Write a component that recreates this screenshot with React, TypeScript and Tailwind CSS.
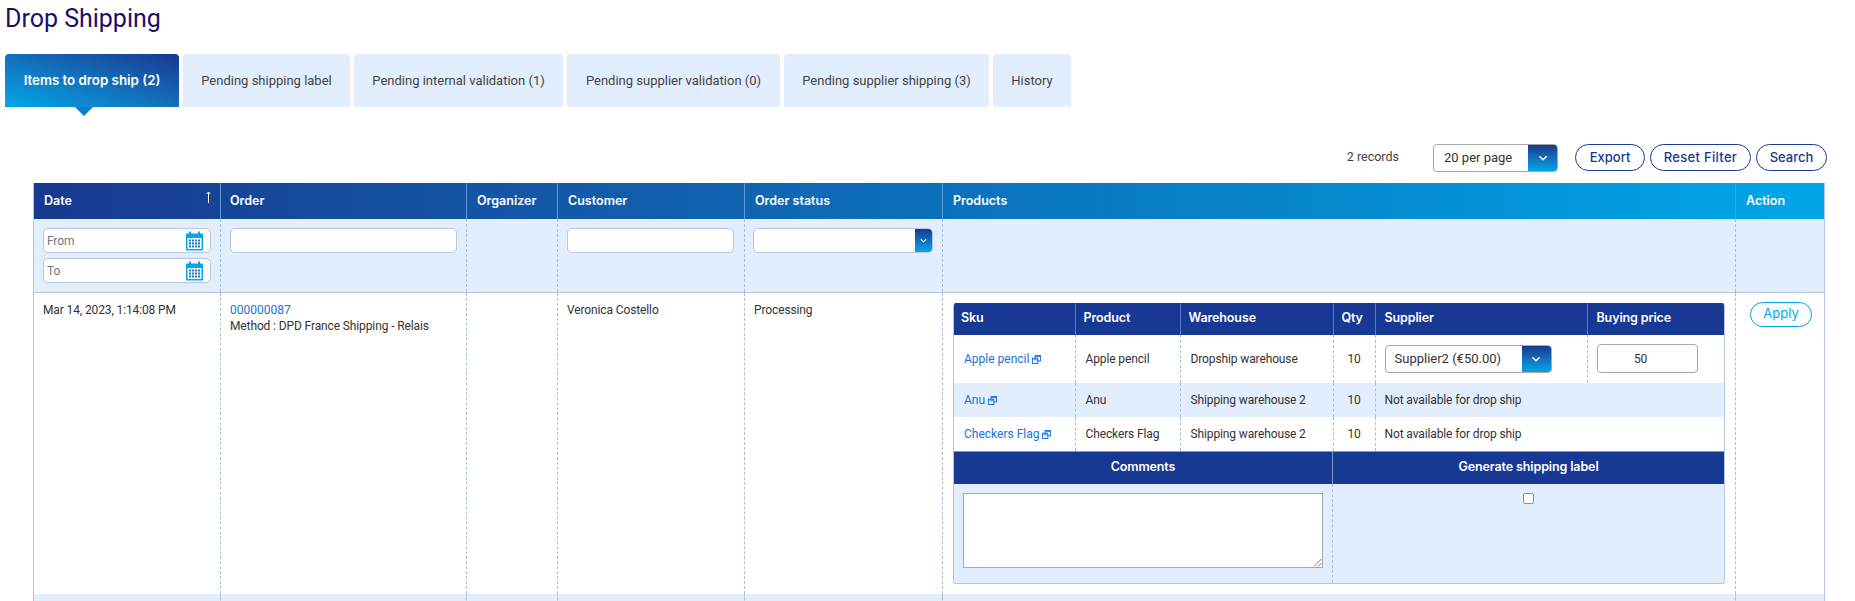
import React from 'react';

const BODY = "font-['Roboto',sans-serif]";
const HEAD = "font-['Inter',sans-serif]";

const tabs = [
  { label: 'Items to drop ship (2)', width: 'w-[174px]', active: true },
  { label: 'Pending shipping label', width: 'w-[167px]' },
  { label: 'Pending internal validation (1)', width: 'w-[209px]' },
  { label: 'Pending supplier validation (0)', width: 'w-[213px]' },
  { label: 'Pending supplier shipping (3)', width: 'w-[205px]' },
  { label: 'History', width: 'w-[78px]' },
];

const skuRows = [
  { sku: 'Apple pencil', warehouse: 'Dropship warehouse', height: 'h-[48px]', bg: 'bg-white' },
  { sku: 'Anu', warehouse: 'Shipping warehouse 2', height: 'h-[34px]', bg: 'bg-[#e2eefd]' },
  { sku: 'Checkers Flag', warehouse: 'Shipping warehouse 2', height: 'h-[34px]', bg: 'bg-white' },
];

const CalendarIcon = () => (
  <svg width="17" height="20" viewBox="0 0 17 20" className="shrink-0">
    <rect x="0" y="2.5" width="17" height="17" rx="1" fill="#00a7e8" />
    <rect x="1.5" y="7" width="14" height="11" fill="#fff" />
    <rect x="3" y="0.5" width="2" height="4" fill="#00a7e8" />
    <rect x="12" y="0.5" width="2" height="4" fill="#00a7e8" />
    {[3, 6, 9, 12].map((x) =>
      [8.5, 11.5, 14.5].map((y) => <rect key={`${x}-${y}`} x={x} y={y} width="2" height="2" fill="#0b7cc6" />)
    )}
  </svg>
);

const LinkIcon = () => (
  <svg width="9" height="9" viewBox="0 0 10 10" fill="none" stroke="#1a73e8" strokeWidth="1.1" className="ml-[3px] inline-block align-[-1px]">
    <rect x="3.5" y="0.5" width="6" height="6" />
    <path d="M3.5 1.5h6" />
    <rect x="0.5" y="3.5" width="6" height="6" fill="#fff" fillOpacity="0.6" />
    <path d="M0.5 4.5h6" />
  </svg>
);

const SortArrow = () => (
  <svg width="5" height="12" viewBox="0 0 5 12" fill="none" stroke="#fff" className="absolute right-[9px] top-[8px]">
    <path d="M2.5 1v11" />
    <path d="M.5 3 2.5 1 4.5 3" />
  </svg>
);

const Chevron = ({ size = 10 }: { size?: number }) => (
  <svg width={size} height={size} viewBox="0 0 10 10" fill="none" stroke="#fff" strokeWidth="1.2">
    <path d="M2 3.5 5 6.5 8 3.5" />
  </svg>
);

const OutlineButton = ({ label, width }: { label: string; width: string }) => (
  <button className={`${width} h-[27px] rounded-full border border-[#17398f] bg-white ${HEAD} text-[13px] font-medium text-[#17398f]`}>
    {label}
  </button>
);

const DateInput = ({ placeholder }: { placeholder: string }) => (
  <div className="flex h-[25px] w-[168px] items-center justify-between rounded-[5px] border border-[#b3c7e2] bg-white pl-[3px] pr-[7px]">
    <span className="text-[12px] text-[#757575]">{placeholder}</span>
    <CalendarIcon />
  </div>
);

const ProductsTable = () => (
  <div className="w-[772px] overflow-hidden rounded-[3px] border border-t-0 border-[#b3c7e2] bg-[#e2eefd]">
    <table className="w-full table-fixed border-collapse">
      <colgroup>
        <col className="w-[121px]" />
        <col className="w-[105px]" />
        <col className="w-[153px]" />
        <col className="w-[42px]" />
        <col className="w-[212px]" />
        <col />
      </colgroup>
      <thead>
        <tr className={`h-[32px] bg-[#173893] text-left ${HEAD} text-[12.5px] font-semibold text-white`}>
          <th className="pl-[7px] font-semibold">Sku</th>
          <th className="border-l border-[#5c7ab8] pl-2 font-semibold">Product</th>
          <th className="border-l border-[#5c7ab8] pl-2 font-semibold">Warehouse</th>
          <th className="border-l border-[#5c7ab8] pl-2 font-semibold">Qty</th>
          <th className="border-l border-[#5c7ab8] pl-[9px] font-semibold">Supplier</th>
          <th className="border-l border-[#5c7ab8] pl-[9px] font-semibold">Buying price</th>
        </tr>
      </thead>
      <tbody className="text-[12px] tracking-[-0.12px] text-[#333]">
        {skuRows.map((row, i) => (
          <tr key={row.sku} className={`${row.height} ${row.bg}`}>
            <td className="pl-2.5 tracking-normal text-[#1a73d4]">
              {row.sku}
              <LinkIcon />
            </td>
            <td className="border-l border-dashed border-[#a9bedb] pl-2.5">{row.sku}</td>
            <td className="border-l border-dashed border-[#a9bedb] pl-2.5">{row.warehouse}</td>
            <td className="border-l border-dashed border-[#a9bedb] text-center">10</td>
            {i === 0 ? (
              <>
                <td className="border-l border-dashed border-[#a9bedb] pl-[9px]">
                  <div className="flex h-[28px] w-[167px] items-center overflow-hidden rounded-[4px] border border-[#a8a8a8] bg-white">
                    <span className="flex-1 pl-[9px] text-[13px] tracking-normal">Supplier2 (€50.00)</span>
                    <span className="flex h-full w-[29px] items-center justify-center bg-gradient-to-b from-[#17398f] to-[#00a7e8]">
                      <Chevron size={12} />
                    </span>
                  </div>
                </td>
                <td className="border-l border-dashed border-[#a9bedb] pl-[9px]">
                  <div className="flex h-[29px] w-[101px] items-center justify-center rounded-[4px] border border-[#a8a8a8] bg-white pr-[13px] text-[12px]">
                    50
                  </div>
                </td>
              </>
            ) : (
              <td colSpan={2} className="border-l border-dashed border-[#a9bedb] pl-[9px]">
                Not available for drop ship
              </td>
            )}
          </tr>
        ))}
      </tbody>
    </table>
    <div className="grid grid-cols-[378px_1fr]">
      <div className={`flex h-[33px] items-center justify-center border-t border-[#7f97c6] bg-[#173893] ${HEAD} text-[12.5px] font-semibold text-white`}>
        Comments
      </div>
      <div className={`flex h-[33px] items-center justify-center border-l border-t border-[#7f97c6] bg-[#173893] ${HEAD} text-[12.5px] font-semibold text-white`}>
        Generate shipping label
      </div>
      <div className="h-[99px] pl-[9px] pt-[9px]">
        <div className="relative h-[75px] w-[360px] border border-[#a8a8a8] bg-white">
          <svg width="9" height="9" viewBox="0 0 9 9" stroke="#555" strokeWidth="0.8" className="absolute bottom-0 right-0">
            <path d="M1 8.5 8.5 1M5 8.5 8.5 5" />
          </svg>
        </div>
      </div>
      <div className="flex h-[99px] justify-center border-l border-dashed border-[#a9bedb] pt-[9px]">
        <span className="h-[11px] w-[11px] rounded-[2px] border border-[#8f8f8f] bg-white" />
      </div>
    </div>
  </div>
);

export default function App() {
  return (
    <div className={`h-[601px] overflow-hidden bg-white ${BODY}`}>
      <h1 className="pl-[5px] pt-[4px] text-[25px] leading-[30px] text-[#1a0f6e]">Drop Shipping</h1>

      <div className="mt-[20px] flex gap-[4px] pl-[5px]">
        {tabs.map((tab) =>
          tab.active ? (
            <div key={tab.label} className={`relative flex h-[53px] ${tab.width} items-center justify-center rounded-t-[4px] bg-gradient-to-tr from-[#00a7e8] to-[#17398f] ${HEAD} text-[13.3px] font-semibold text-white`}>
              {tab.label}
              <span className="absolute left-[70px] top-full h-0 w-0 border-x-[9px] border-t-[9px] border-x-transparent border-t-[#0a80c8]" />
            </div>
          ) : (
            <div key={tab.label} className={`flex h-[53px] ${tab.width} items-center justify-center rounded-t-[4px] bg-[#e2eefd] text-[13px] text-[#444]`}>
              {tab.label}
            </div>
          )
        )}
      </div>

      <div className="mt-[36px] flex h-[29px] items-center justify-end pr-[28px]">
        <span className="mr-[34px] text-[12.5px] text-[#444]">2 records</span>
        <div className="mr-[17px] flex h-[28px] w-[125px] items-center overflow-hidden rounded-[4px] border border-[#a8a8a8]">
          <span className="flex-1 pl-[10px] text-[13px] text-[#333]">20 per page</span>
          <span className="flex h-full w-[29px] items-center justify-center bg-gradient-to-b from-[#17398f] to-[#00a7e8]">
            <Chevron size={12} />
          </span>
        </div>
        <div className="flex gap-[5px]">
          <OutlineButton label="Export" width="w-[70px]" />
          <OutlineButton label="Reset Filter" width="w-[101px] tracking-[0.3px]" />
          <OutlineButton label="Search" width="w-[71px]" />
        </div>
      </div>

      <div className="mt-[11px] pl-[33px] pr-[30px]">
        <table className="w-full table-fixed border-collapse border-x border-[#b3c7e2] text-[12px] tracking-[-0.12px] text-[#333]">
          <colgroup>
            <col className="w-[187px]" />
            <col className="w-[246px]" />
            <col className="w-[91px]" />
            <col className="w-[187px]" />
            <col className="w-[198px]" />
            <col className="w-[793px]" />
            <col />
          </colgroup>
          <thead>
            <tr className={`h-[36px] bg-gradient-to-r from-[#17398f] via-[#0b70bb] to-[#00a7e8] text-left ${HEAD} text-[12.5px] tracking-normal text-white`}>
              <th className="relative pl-[10px] font-semibold">
                Date
                <SortArrow />
              </th>
              <th className="border-l border-[#5f9bd3] pl-[9px] font-semibold">Order</th>
              {['Organizer', 'Customer', 'Order status', 'Products', 'Action'].map((h) => (
                <th key={h} className="border-l border-[#5f9bd3] pl-[10px] font-semibold">{h}</th>
              ))}
            </tr>
            <tr className="h-[73px] border-b border-[#b3c7e2] bg-[#e2eefd] align-top font-normal">
              <td className="pl-[9px] pt-[9px]">
                <div className="flex flex-col gap-[5px]">
                  <DateInput placeholder="From" />
                  <DateInput placeholder="To" />
                </div>
              </td>
              <td className="border-l border-dashed border-[#a9bedb] pl-[9px] pt-[9px]">
                <div className="h-[25px] w-[227px] rounded-[5px] border border-[#b3c7e2] bg-white" />
              </td>
              <td className="border-l border-dashed border-[#a9bedb]" />
              <td className="border-l border-dashed border-[#a9bedb] pl-[9px] pt-[9px]">
                <div className="h-[25px] w-[167px] rounded-[5px] border border-[#b3c7e2] bg-white" />
              </td>
              <td className="border-l border-dashed border-[#a9bedb] pl-[8px] pt-[9px]">
                <div className="flex h-[25px] w-[180px] justify-end overflow-hidden rounded-[5px] border border-[#b3c7e2] bg-white">
                  <span className="flex h-full w-[17px] items-center justify-center bg-gradient-to-b from-[#17398f] to-[#00a7e8]">
                    <Chevron size={9} />
                  </span>
                </div>
              </td>
              <td className="border-l border-dashed border-[#a9bedb]" />
              <td className="border-l border-dashed border-[#a9bedb]" />
            </tr>
          </thead>
          <tbody>
            <tr className="h-[302px] align-top">
              <td className="pl-[9px] pt-[9px] leading-[16px]">Mar 14, 2023, 1:14:08 PM</td>
              <td className="border-l border-dashed border-[#a9bedb] pl-[9px] pt-[9px] leading-[16px]">
                <div className="tracking-normal text-[#1a73d4]">000000087</div>
                <div>Method : DPD France Shipping - Relais</div>
              </td>
              <td className="border-l border-dashed border-[#a9bedb]" />
              <td className="border-l border-dashed border-[#a9bedb] pl-[9px] pt-[9px] leading-[16px]">Veronica Costello</td>
              <td className="border-l border-dashed border-[#a9bedb] pl-[9px] pt-[9px] leading-[16px]">Processing</td>
              <td className="border-l border-dashed border-[#a9bedb] pl-[10px] pt-[10px]">
                <ProductsTable />
              </td>
              <td className="border-l border-dashed border-[#a9bedb] pl-[14px] pt-[9px]">
                <button className={`h-[25px] w-[62px] rounded-full border border-[#00a7e8] bg-white ${HEAD} text-[13px] tracking-normal text-[#00a7e8]`}>
                  Apply
                </button>
              </td>
            </tr>
            <tr className="h-[10px] bg-[#e2eefd]">
              <td />
              <td className="border-l border-dashed border-[#a9bedb]" />
              <td className="border-l border-dashed border-[#a9bedb]" />
              <td className="border-l border-dashed border-[#a9bedb]" />
              <td className="border-l border-dashed border-[#a9bedb]" />
              <td className="border-l border-dashed border-[#a9bedb]" />
              <td className="border-l border-dashed border-[#a9bedb]" />
            </tr>
          </tbody>
        </table>
      </div>
    </div>
  );
}
